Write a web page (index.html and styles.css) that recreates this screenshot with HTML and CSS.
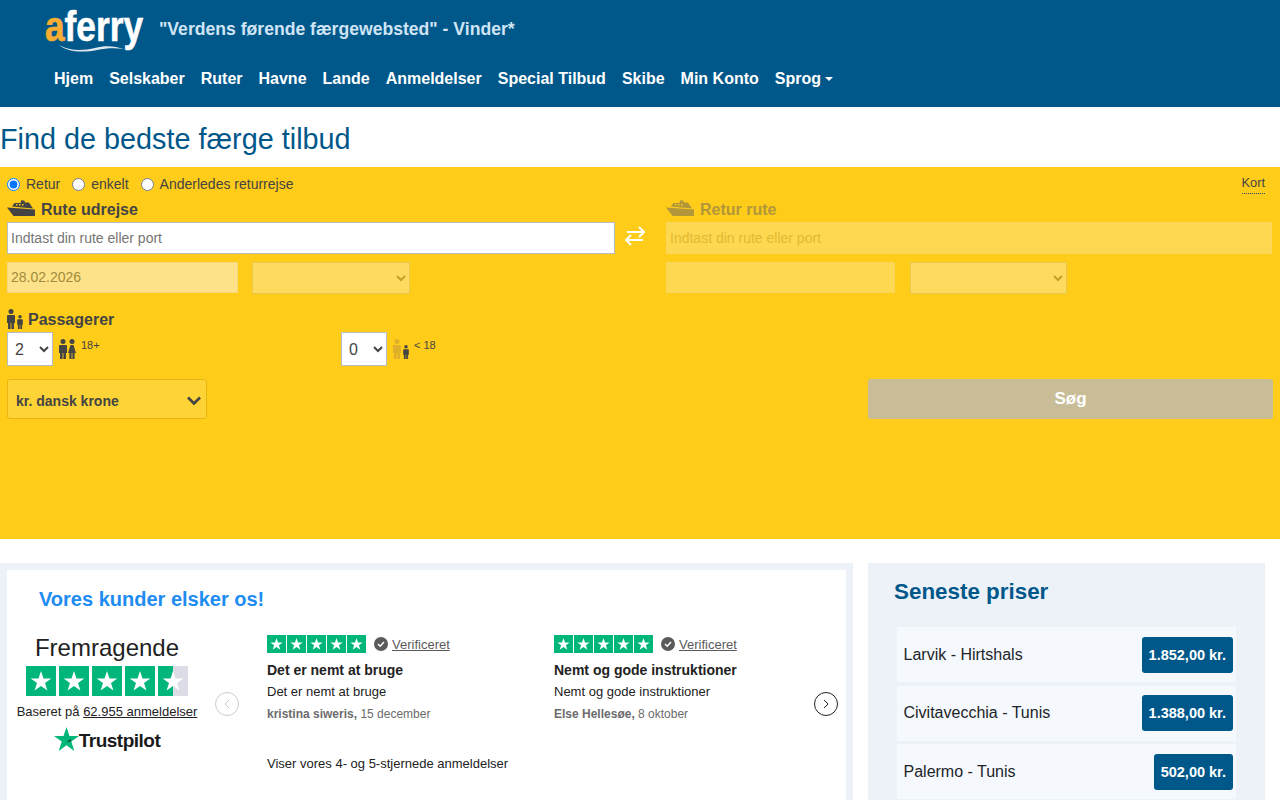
FILE: index.html
```html
<!DOCTYPE html>
<html lang="da">
<head>
<meta charset="utf-8">
<title>aferry</title>
<link rel="stylesheet" href="styles.css">
</head>
<body>
<svg class="defs" width="0" height="0">
  <symbol id="boat" viewBox="0 0 28 17">
    <path fill-rule="evenodd" d="M0 8.500 28 10.500V17H6.500ZM5 7.500 7.500 4H13.500L14.500 1 18 2 17.500 3.500H22L26 9.500ZM9 5v1.500h1.500V5ZM12 5v1.500h1.500V5ZM15 5v1.500h1.500V5Z"/>
  </symbol>
  <symbol id="man" viewBox="0 0 8 20">
    <circle cx="4" cy="2.500" r="2.500"/>
    <path d="M1 6h6a1 1 0 0 1 1 1v7H7v6H4.400v-6h-.8v6H1v-6H0V7a1 1 0 0 1 1-1Z"/>
  </symbol>
  <symbol id="woman" viewBox="0 0 8 20">
    <circle cx="4" cy="2.500" r="2.500"/>
    <path d="M2.500 6h3L8 14H6.600v6H4.400v-6h-.8v6H1.400v-6H0Z"/>
  </symbol>
  <symbol id="tp" viewBox="0 0 30 30">
    <path fill="#fff" d="m15 5 2.500 7.500h7.800l-6.300 4.600 2.400 7.500-6.400-4.600-6.400 4.600L11 17.100 4.700 12.500h7.800Z"/>
  </symbol>
</svg>

<header class="site-header">
  <div class="brand-row">
    <div class="logo">
      <span class="logo-word"><span class="logo-a">a</span>ferry</span>
      <svg class="logo-wave" viewBox="0 0 65 7"><path d="M0 0C10 6 24 6 36 3 46 0 56 1 65 4 56 3 48 3 38 5 24 8 8 7 0 0Z"/></svg>
    </div>
    <div class="tagline">"Verdens førende færgewebsted" - Vinder*</div>
  </div>
  <nav class="main-nav">
    <a>Hjem</a><a>Selskaber</a><a>Ruter</a><a>Havne</a><a>Lande</a><a>Anmeldelser</a><a>Special Tilbud</a><a>Skibe</a><a>Min Konto</a><a class="caret">Sprog</a>
  </nav>
</header>

<h1 class="page-title">Find de bedste færge tilbud</h1>

<section class="search">
  <div class="trip-row">
    <label class="radio"><input type="radio" name="trip" checked>Retur</label>
    <label class="radio"><input type="radio" name="trip">enkelt</label>
    <label class="radio"><input type="radio" name="trip">Anderledes returrejse</label>
    <a class="map-link">Kort</a>
  </div>
  <div class="routes">
    <div class="route">
      <div class="route-title"><svg class="boat"><use href="#boat"/></svg>Rute udrejse</div>
      <input class="route-input" type="text" placeholder="Indtast din rute eller port">
      <div class="date-row">
        <input class="date-input" type="text" value="28.02.2026">
        <select class="time-select"><option></option></select>
      </div>
    </div>
    <div class="swap">
      <svg width="22" height="20" viewBox="0 0 22 20" fill="none" stroke="#fff" stroke-width="2"><path d="M3 6h17M15 1l5 5-5 5M19 14H2M7 9l-5 5 5 5"/></svg>
    </div>
    <div class="route route-off">
      <div class="route-title"><svg class="boat"><use href="#boat"/></svg>Retur rute</div>
      <input class="route-input" type="text" placeholder="Indtast din rute eller port">
      <div class="date-row">
        <input class="date-input" type="text">
        <select class="time-select"><option></option></select>
      </div>
    </div>
  </div>
  <div class="pax-title">
    <svg class="ico-m"><use href="#man"/></svg><svg class="ico-c"><use href="#man"/></svg>
    <span>Passagerer</span>
  </div>
  <div class="pax-row">
    <div class="pax">
      <select class="pax-select"><option>2</option></select>
      <svg class="ico-a"><use href="#man"/></svg><svg class="ico-a"><use href="#woman"/></svg>
      <span class="age">18+</span>
    </div>
    <div class="pax">
      <select class="pax-select"><option>0</option></select>
      <svg class="ico-a faint"><use href="#man"/></svg><svg class="ico-k"><use href="#man"/></svg>
      <span class="age">&lt; 18</span>
    </div>
  </div>
  <div class="action-row">
    <div class="currency-wrap">
      <select class="currency"><option>kr. dansk krone</option></select>
      <svg class="currency-chevron" width="14" height="9" viewBox="0 0 14 9" fill="none" stroke="#444" stroke-width="2.600"><path d="m1 1.500 6 6 6-6"/></svg>
    </div>
    <button class="search-btn" type="button">Søg</button>
  </div>
</section>

<main class="lower">
  <section class="reviews-shell">
    <div class="reviews">
      <h2 class="reviews-title">Vores kunder elsker os!</h2>
      <div class="reviews-body">
        <div class="summary">
          <div class="rating-word">Fremragende</div>
          <div class="big-stars">
            <span class="bs"><svg><use href="#tp"/></svg></span>
            <span class="bs"><svg><use href="#tp"/></svg></span>
            <span class="bs"><svg><use href="#tp"/></svg></span>
            <span class="bs"><svg><use href="#tp"/></svg></span>
            <span class="bs half"><svg><use href="#tp"/></svg></span>
          </div>
          <div class="based">Baseret på <u>62.955 anmeldelser</u></div>
          <div class="tp-brand">
            <svg class="tp-star" width="25" height="24" viewBox="0 0 25 24"><path fill="#00b67a" d="M12.500 0l3 9h9.500l-7.700 5.600 3 9.400-7.800-5.800-7.800 5.800 3-9.400L0 9h9.500Z"/><path fill="#005128" d="m17.300 14.600-.8-2.500-4 2.900Z"/></svg>
            <span>Trustpilot</span>
          </div>
        </div>
        <button class="arrow arrow-off" type="button"><svg width="8" height="10" viewBox="0 0 8 10" fill="none" stroke="#c4c4c4"><path d="M6 1 2 5l4 4"/></svg></button>
        <div class="review-list">
          <div class="review-cards">
            <article class="review">
              <div class="review-top">
                <span class="stars"><span class="ss"><svg><use href="#tp"/></svg></span><span class="ss"><svg><use href="#tp"/></svg></span><span class="ss"><svg><use href="#tp"/></svg></span><span class="ss"><svg><use href="#tp"/></svg></span><span class="ss"><svg><use href="#tp"/></svg></span></span>
                <svg class="check" viewBox="0 0 14 14"><circle cx="7" cy="7" r="7" fill="#5a5a5a"/><path d="m4 7 2.200 2.200L10 5" fill="none" stroke="#fff" stroke-width="1.500"/></svg>
                <u class="verified">Verificeret</u>
              </div>
              <h3 class="review-head">Det er nemt at bruge</h3>
              <p class="review-text">Det er nemt at bruge</p>
              <p class="review-by"><b>kristina siweris,</b> 15 december</p>
            </article>
            <article class="review">
              <div class="review-top">
                <span class="stars"><span class="ss"><svg><use href="#tp"/></svg></span><span class="ss"><svg><use href="#tp"/></svg></span><span class="ss"><svg><use href="#tp"/></svg></span><span class="ss"><svg><use href="#tp"/></svg></span><span class="ss"><svg><use href="#tp"/></svg></span></span>
                <svg class="check" viewBox="0 0 14 14"><circle cx="7" cy="7" r="7" fill="#5a5a5a"/><path d="m4 7 2.200 2.200L10 5" fill="none" stroke="#fff" stroke-width="1.500"/></svg>
                <u class="verified">Verificeret</u>
              </div>
              <h3 class="review-head">Nemt og gode instruktioner</h3>
              <p class="review-text">Nemt og gode instruktioner</p>
              <p class="review-by"><b>Else Hellesøe,</b> 8 oktober</p>
            </article>
          </div>
          <p class="review-note">Viser vores 4- og 5-stjernede anmeldelser</p>
        </div>
        <button class="arrow" type="button"><svg width="8" height="10" viewBox="0 0 8 10" fill="none" stroke="#222"><path d="m2 1 4 4-4 4"/></svg></button>
      </div>
    </div>
  </section>
  <aside class="prices">
    <h2 class="prices-title">Seneste priser</h2>
    <ul class="price-list">
      <li class="price-row"><span>Larvik - Hirtshals</span><b class="price">1.852,00 kr.</b></li>
      <li class="price-row"><span>Civitavecchia - Tunis</span><b class="price">1.388,00 kr.</b></li>
      <li class="price-row"><span>Palermo - Tunis</span><b class="price">502,00 kr.</b></li>
    </ul>
  </aside>
</main>
</body>
</html>
```
FILE: styles.css
```css
* { box-sizing: border-box; }
html { overflow: hidden; height: 800px; }
body { margin: 0; font-family: "Liberation Sans", Arial, sans-serif; font-size: 16px; color: #212529; background: #fff; }
.defs { position: absolute; }
svg { display: block; }

.site-header { background: #00588a; height: 107px; }
.brand-row { display: flex; height: 59px; padding-left: 46px; }
.logo { position: relative; flex: none; width: 113px; height: 58px; }
.logo-word { display: block; width: 118px; margin-left: -1px; padding-top: 5px; font-weight: 700; font-size: 42px; line-height: 44px; color: #fff; white-space: nowrap; transform: scaleX(0.84); transform-origin: left top; -webkit-text-stroke: 0.6px #fff; }
.logo-a { color: #f9ae33; -webkit-text-stroke: 0.6px #f9ae33; }
.logo-wave { position: absolute; left: 13px; top: 45px; width: 65px; height: 7px; fill: #dfe8ef; }
.tagline { padding-top: 19px; font-size: 17.6px; line-height: 21px; font-weight: 700; color: #cfe4f5; }
.main-nav { display: flex; padding-left: 46px; }
.main-nav a { padding: 8px; font-size: 16px; line-height: 24px; font-weight: 700; color: #fff; }
.caret::after { content: ""; display: inline-block; margin-left: 4px; vertical-align: 3px; border-top: 4px solid #fff; border-left: 4px solid transparent; border-right: 4px solid transparent; }

.page-title { margin: 0; height: 60px; padding-top: 15px; font-size: 28.8px; line-height: 35px; font-weight: 400; color: #00588a; }

.search { height: 372px; padding: 7px 7px 0; background: #fecc19; color: #444; }
.trip-row { display: flex; align-items: center; height: 20px; font-size: 14px; }
.radio { display: flex; align-items: center; margin-right: 12px; }
.radio input { width: 13px; height: 13px; margin: 0 6px 0 0; }
.map-link { margin-left: auto; margin-right: 8px; font-size: 12.8px; line-height: 18px; border-bottom: 1px dotted #33417a; padding-bottom: 1px; }
.routes { display: flex; margin-top: 5px; }
.route { width: 608px; }
.route-off { width: 606px; }
.route-title { display: flex; align-items: center; height: 23px; padding-bottom: 2px; font-size: 16px; font-weight: 700; }
.boat { width: 28px; height: 17px; margin-right: 6px; fill: #444; margin-top: -4px; }
.route-input { display: block; width: 100%; height: 32px; padding: 0 3px; border: 1px solid #b9bcc4; background: #fff; font: 14px "Liberation Sans", sans-serif; color: #444; }
.route-input::placeholder { color: #757575; opacity: 1; }
.date-row { display: flex; gap: 14px; margin-top: 8px; }
.date-input { width: 231px; height: 31px; padding: 0 3px 1px; border: 1px solid #f5d77f; background: #fee28a; font: 14px "Liberation Sans", sans-serif; color: #a08a3a; }
.time-select { width: 158px; height: 32px; border: 1px solid #b9bcc4; background: #fff; opacity: 0.3; font: 14px "Liberation Sans", sans-serif; color: #444; }
.swap { width: 51px; padding: 27px 0 0 9px; }
.route-off .route-title { color: #b2963a; }
.route-off .boat { fill: #b2963a; }
.route-off .route-input { background: #fed850; border-color: #f8d55e; }
.route-off .route-input::placeholder { color: #e3b834; }
.route-off .date-row { gap: 15px; }
.route-off .date-input { width: 229px; background: #fed850; border-color: #f8d55e; }
.route-off .time-select { width: 157px; }

.pax-title { display: flex; align-items: flex-start; height: 23px; margin-top: 15px; font-size: 16px; font-weight: 700; line-height: 22px; }
.pax-title span { margin-left: 5px; }
.ico-m { width: 8px; height: 20px; fill: #444; }
.ico-c { width: 6px; height: 14px; fill: #444; margin: 6px 0 0 2px; }
.pax-row { display: flex; height: 34px; }
.pax { display: flex; align-items: flex-start; width: 334px; }
.pax-select { width: 46px; height: 34px; padding-left: 3px; border: 1px solid #b9bcc4; background: #fff; font: 16px "Liberation Sans", sans-serif; color: #444; }
.ico-a { width: 8px; height: 20px; margin: 7px 0 0 0; fill: #444; }
.pax-select + .ico-a { margin-left: 6px; }
.ico-a + .ico-a { margin-left: 1px; }
.ico-k { width: 6px; height: 14px; margin: 13px 0 0 2px; fill: #444; }
.faint { fill: #dfb02a; }
.age { margin: 6px 0 0 5px; font-size: 11px; line-height: 14px; }
.action-row { display: flex; justify-content: space-between; margin-top: 13px; padding-right: 0; }
.currency-wrap { position: relative; width: 200px; height: 40px; }
.currency { display: block; width: 200px; height: 40px; padding: 3px 0 0 8px; appearance: none; -webkit-appearance: none; border: 1px solid #e5b515; border-radius: 3px; background: #fed335; font: 700 14px "Liberation Sans", sans-serif; color: #444; }
.currency-chevron { position: absolute; right: 6px; top: 17px; pointer-events: none; }
.search-btn { width: 405px; height: 40px; border: 0; border-radius: 3px; background: #c8bd97; color: #fff; font: 700 17px "Liberation Sans", sans-serif; padding-bottom: 1px; }

.lower { display: flex; align-items: flex-start; margin-top: 24px; }
.reviews-shell { width: 853px; height: 237px; padding: 7px 7px 0; background: #edf2f9; }
.reviews { height: 230px; background: #fff; }
.reviews-title { margin: 0; padding: 17px 0 0 32px; font-size: 20px; line-height: 24px; font-weight: 700; color: #1e8cf0; }
.reviews-body { display: flex; align-items: flex-start; padding-top: 24px; }
.summary { width: 200px; text-align: center; }
.rating-word { font-size: 24px; line-height: 26px; margin-bottom: 5px; color: #222; }
.big-stars { display: flex; justify-content: center; gap: 3px; }
.bs { display: block; width: 30px; height: 30px; background: #00b67a; }
.bs svg { width: 30px; height: 30px; }
.half { background: linear-gradient(90deg, #00b67a 50%, #dcdce6 50%); }
.based { margin-top: 7px; font-size: 13px; line-height: 18px; color: #222; }
.tp-brand { display: flex; justify-content: center; align-items: center; margin-top: 6px; font-size: 19px; line-height: 28px; font-weight: 700; color: #1a1a1a; letter-spacing: -0.5px; }
.tp-star { margin-bottom: 4px; }
.arrow { display: flex; align-items: center; justify-content: center; width: 24px; height: 24px; margin-top: 57px; padding: 0; border: 1px solid #222; border-radius: 50%; background: #fff; }
.arrow-off { margin-left: 8px; border-color: #ccc; }
.review-list { width: 547px; margin-left: 28px; margin-right: 0; }
.review-cards { display: flex; }
.review { width: 287px; flex: none; }
.review-top { display: flex; align-items: center; height: 18px; }
.stars { display: flex; gap: 1px; margin-right: 8px; }
.ss { display: block; width: 19px; height: 18px; background: #00b67a; }
.ss svg { width: 19px; height: 18px; }
.check { width: 14px; height: 14px; margin-right: 4px; }
.verified { font-size: 13px; color: #5a5a5a; }
.review-head { margin: 8px 0 0; font-size: 14px; line-height: 18px; font-weight: 700; color: #222; }
.review-text { margin: 4px 0 0; font-size: 13px; line-height: 18px; color: #222; }
.review-by { margin: 4px 0 0; font-size: 12px; line-height: 18px; color: #6b6b6b; }
.review-note { margin: 32px 0 0; font-size: 13px; line-height: 18px; color: #222; }

.prices { width: 397px; height: 237px; margin-left: 15px; padding: 0 29px; background: #edf2f9; }
.prices-title { margin: 0 0 0 -3px; padding-top: 16px; height: 64px; font-size: 22.4px; line-height: 26px; font-weight: 700; color: #00588a; }
.price-list { margin: 0; padding: 0; list-style: none; }
.price-row { display: flex; align-items: center; justify-content: space-between; height: 55px; margin-bottom: 3.5px; padding: 0 3px 0 6.5px; background: #f5f8fc; font-size: 16px; }
.price { padding: 0 7px; height: 36px; line-height: 36px; border-radius: 3px; background: #00588a; color: #fff; font-size: 14.5px; }
```
